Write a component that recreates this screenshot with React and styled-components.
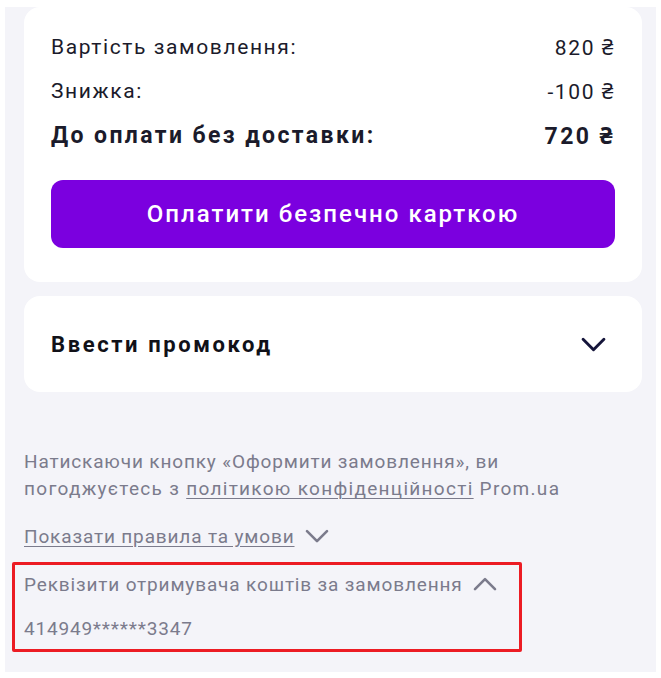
import React from 'react'
import styled, { createGlobalStyle } from 'styled-components'

const GlobalStyle = createGlobalStyle`
  html, body {
    margin: 0;
    padding: 0;
    background: #ffffff;
  }
  body {
    font-family: Roboto, "Noto Sans", "Liberation Sans", sans-serif;
  }
`

const Page = styled.div`
  margin: 7px 5px 0 5px;
  width: 651px;
  height: 665px;
  background: #f4f4f9;
  box-sizing: border-box;
  padding: 0 14px 0 19px;
  display: flex;
  flex-direction: column;
`

const Card = styled.div`
  background: #ffffff;
  border-radius: 16px;
  box-sizing: border-box;
`

const SummaryCard = styled(Card)`
  padding: 18px 27px 34px 27px;
`

const Row = styled.div`
  display: flex;
  justify-content: space-between;
  align-items: center;
  height: 44px;
  font-size: ${p => (p.$total ? '23px' : '21px')};
  font-weight: ${p => (p.$total ? 700 : 400)};
  letter-spacing: ${p => (p.$total ? '2.4px' : '1.6px')};
  color: #1b1b2b;
`

const PayButton = styled.button`
  margin-top: 23px;
  width: 100%;
  height: 68px;
  border: none;
  border-radius: 12px;
  background: #7b00df;
  color: #ffffff;
  font-family: inherit;
  font-size: 24px;
  font-weight: 500;
  letter-spacing: 2px;
  cursor: pointer;
`

const PromoCard = styled(Card)`
  margin-top: 14px;
  height: 96px;
  padding: 0 36px 0 27px;
  display: flex;
  align-items: center;
  justify-content: space-between;
`

const PromoTitle = styled.span`
  font-size: 22px;
  font-weight: 700;
  letter-spacing: 2.6px;
  color: #111118;
`

const Legal = styled.div`
  margin-top: 56px;
  display: flex;
  flex-direction: column;
  font-size: 19px;
  line-height: 27px;
  letter-spacing: 0.85px;
  color: #7b7b8c;
`

const LegalLine = styled.div`
  display: flex;
  white-space: pre;
  letter-spacing: ${p => p.$wide || '0.85px'};
`

const Link = styled.a`
  color: inherit;
  text-decoration: underline;
  text-underline-offset: 3px;
  text-decoration-thickness: 1px;
`

const Toggle = styled.div`
  display: flex;
  align-items: center;
  gap: 10px;
  font-size: 19px;
  letter-spacing: 0.85px;
  color: #7b7b8c;
  line-height: 27px;
`

const ToggleLink = styled.span`
  text-decoration: ${p => (p.$underline ? 'underline' : 'none')};
  text-underline-offset: 3px;
`

const RulesToggle = styled(Toggle)`
  margin-top: 21px;
`

const Highlight = styled.div`
  margin: 12px 0 0 -12px;
  width: 510px;
  height: 90px;
  box-sizing: border-box;
  border: 3px solid #ec1c24;
  border-radius: 2px;
  padding: 6px 0 0 9px;
`

const CardNumber = styled.div`
  margin-top: 17px;
  font-size: 19px;
  letter-spacing: 0.8px;
  color: #7b7b8c;
  line-height: 27px;
`

const Chevron = ({ up, size = 24, color, width = 3 }) => (
  <svg width={size} height={size * 0.6} viewBox="0 0 24 14" fill="none">
    <path
      d={up ? 'M2 12 L12 2 L22 12' : 'M2 2 L12 12 L22 2'}
      stroke={color}
      strokeWidth={width}
      strokeLinecap="round"
      strokeLinejoin="round"
    />
  </svg>
)

export default function App() {
  return (
    <>
      <GlobalStyle />
      <Page>
        <SummaryCard>
          <Row>
            <span>Вартість замовлення:</span>
            <span>820 ₴</span>
          </Row>
          <Row>
            <span>Знижка:</span>
            <span>-100 ₴</span>
          </Row>
          <Row $total>
            <span>До оплати без доставки:</span>
            <span>720 ₴</span>
          </Row>
          <PayButton>Оплатити безпечно карткою</PayButton>
        </SummaryCard>

        <PromoCard>
          <PromoTitle>Ввести промокод</PromoTitle>
          <Chevron size={25} color="#15153a" width={2.8} />
        </PromoCard>

        <Legal>
          <LegalLine>
            <span>Натискаючи кнопку «Оформити замовлення», ви</span>
          </LegalLine>
          <LegalLine $wide="1.3px">
            <span>погоджуєтесь з </span>
            <Link>політикою конфіденційності</Link>
            <span> Prom.ua</span>
          </LegalLine>
        </Legal>

        <RulesToggle>
          <ToggleLink $underline>Показати правила та умови</ToggleLink>
          <Chevron size={24} color="#7b7b8c" width={2.6} />
        </RulesToggle>

        <Highlight>
          <Toggle>
            <ToggleLink>Реквізити отримувача коштів за замовлення</ToggleLink>
            <Chevron up size={24} color="#7b7b8c" width={2.6} />
          </Toggle>
          <CardNumber>414949******3347</CardNumber>
        </Highlight>
      </Page>
    </>
  )
}
